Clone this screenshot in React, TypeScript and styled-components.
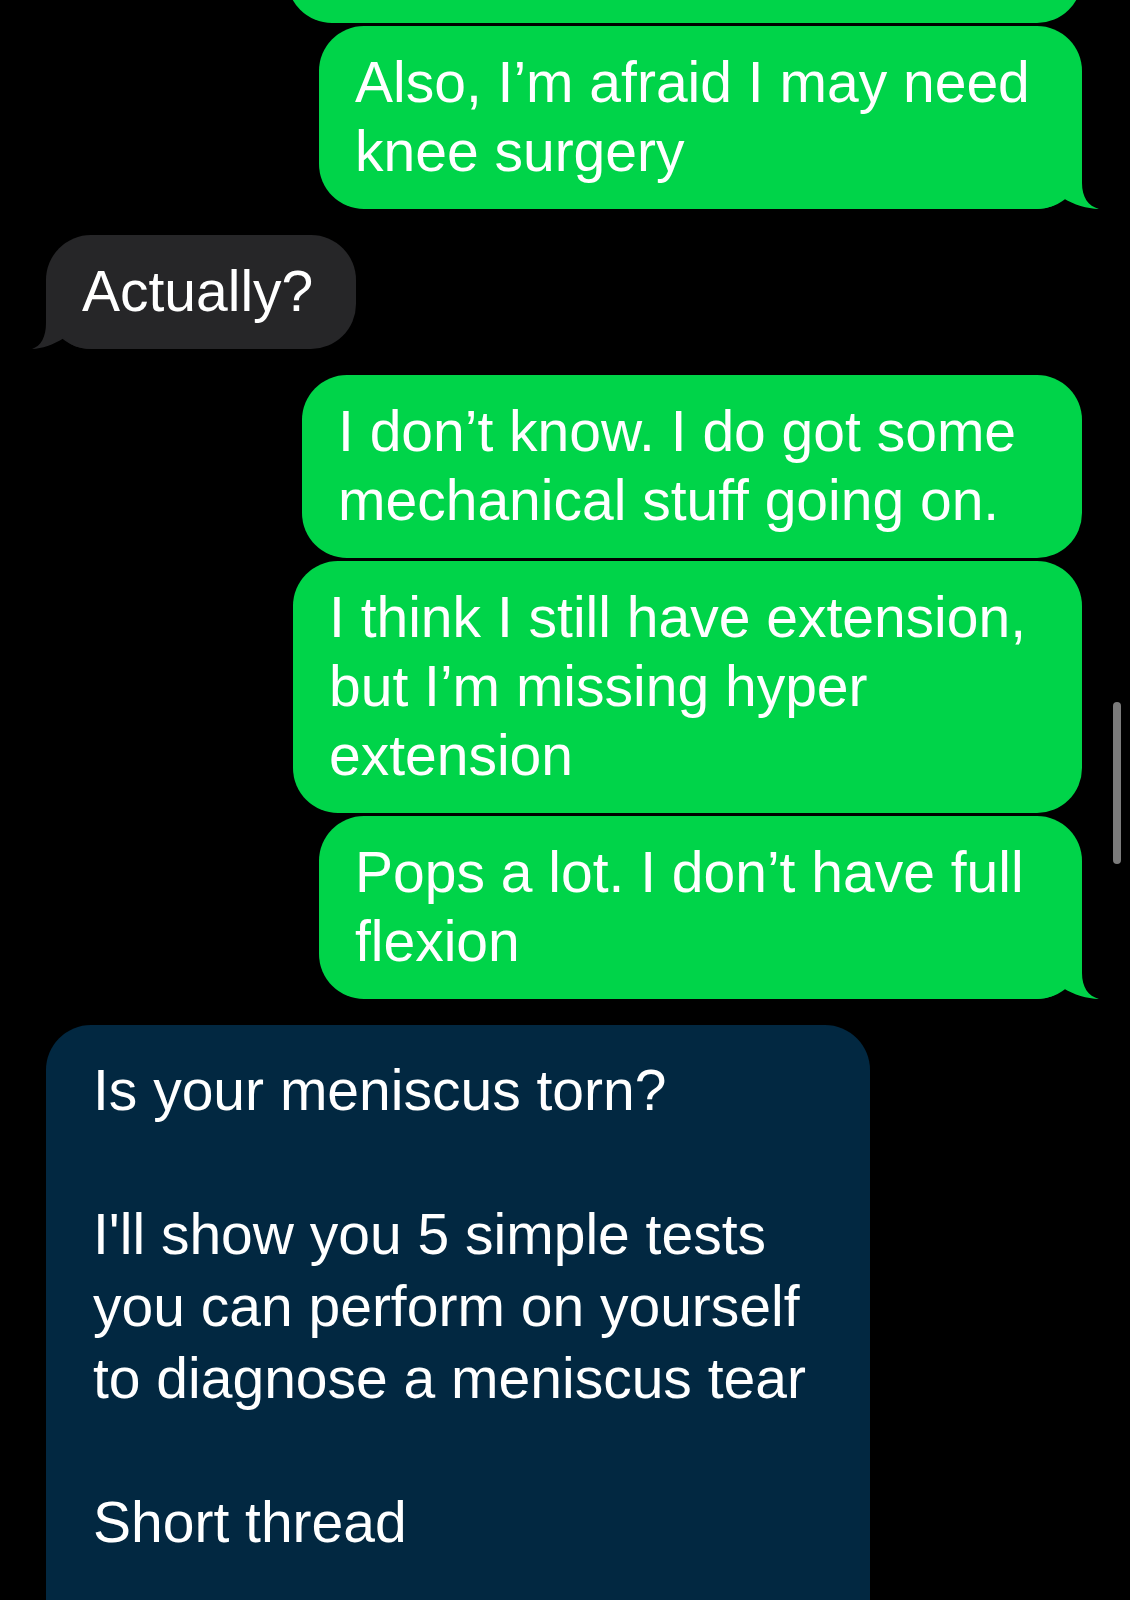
import React from "react";
import styled, { createGlobalStyle, css } from "styled-components";

const GlobalStyle = createGlobalStyle`
  html, body {
    margin: 0;
    padding: 0;
    background: #000;
  }
  body {
    font-family: "Liberation Sans", Arial, sans-serif;
    -webkit-font-smoothing: antialiased;
  }
`;

type Side = "sent" | "received" | "card";

const COLORS: Record<Side, string> = {
  sent: "#00d449",
  received: "#262628",
  card: "#022841",
};

const Screen = styled.main`
  position: relative;
  width: 1130px;
  height: 1600px;
  overflow: hidden;
  background: #000;
`;

const Thread = styled.div`
  display: flex;
  flex-direction: column;
  margin-top: -160px;
  padding: 0 48px 0 46px;
`;

const Row = styled.div<{ $side: Side; $space: number }>`
  display: flex;
  justify-content: ${(p) => (p.$side === "sent" ? "flex-end" : "flex-start")};
  margin-top: ${(p) => p.$space}px;
`;

const Bubble = styled.div<{ $side: Side; $width: number; $height?: number }>`
  position: relative;
  box-sizing: border-box;
  width: ${(p) => p.$width}px;
  ${(p) =>
    p.$height &&
    css`
      height: ${p.$height}px;
    `}
  padding: 22px 40px 23px 36px;
  border-radius: 45px;
  background: ${(p) => COLORS[p.$side]};
  color: #fff;
  font-size: 57px;
  line-height: 69px;
  white-space: nowrap;
  ${(p) =>
    p.$side === "card" &&
    css`
      padding: 29px 47px 90px 47px;
      line-height: 72px;
    `}
`;

const BubbleText = styled.span`
  position: relative;
  z-index: 1;
  display: block;
`;

const Paragraph = styled.p`
  margin: 0 0 72px;
  &:last-child {
    margin-bottom: 0;
  }
`;

const TailSvg = styled.svg<{ $side: "sent" | "received" }>`
  position: absolute;
  z-index: 0;
  bottom: 0;
  width: 64px;
  height: 60px;
  overflow: visible;
  ${(p) =>
    p.$side === "sent"
      ? css`
          right: -18px;
        `
      : css`
          left: -18px;
          transform: scaleX(-1);
        `}
`;

const TAIL_PATHS = {
  sent: "M 0 -60 L 0 -26 C 0 -12 6 -3 17 0 C 5 -0.5 -8 -4 -19 -11 C -25 -4 -33 0 -46 0 L -46 -60 Z",
  received:
    "M 0 -60 L 0 -26 C 0 -12 5 -3 14 0 C 4 -0.5 -7 -4 -18 -11 C -24 -4 -32 0 -46 0 L -46 -60 Z",
};

function Tail({ side }: { side: "sent" | "received" }) {
  return (
    <TailSvg $side={side} viewBox="-46 -60 64 60" aria-hidden="true">
      <path d={TAIL_PATHS[side]} fill={COLORS[side]} />
    </TailSvg>
  );
}

const ScrollThumb = styled.div`
  position: absolute;
  top: 702px;
  left: 1113px;
  width: 8px;
  height: 162px;
  border-radius: 4px;
  background: #7b7b7b;
`;

type Message = {
  side: "sent" | "received";
  width: number;
  space: number;
  tail?: boolean;
  height?: number;
  lines: string[];
};

const messages: Message[] = [
  { side: "sent", width: 795, space: 0, height: 183, lines: [] },
  {
    side: "sent",
    width: 763,
    space: 3,
    tail: true,
    lines: ["Also, I\u2019m afraid I may need", "knee surgery"],
  },
  { side: "received", width: 310, space: 26, tail: true, lines: ["Actually?"] },
  {
    side: "sent",
    width: 780,
    space: 26,
    lines: ["I don\u2019t know. I do got some", "mechanical stuff going on."],
  },
  {
    side: "sent",
    width: 789,
    space: 3,
    lines: ["I think I still have extension,", "but I\u2019m missing hyper", "extension"],
  },
  {
    side: "sent",
    width: 763,
    space: 3,
    tail: true,
    lines: ["Pops a lot. I don\u2019t have full", "flexion"],
  },
];

const cardParagraphs = [
  ["Is your meniscus torn?"],
  [
    "I'll show you 5 simple tests",
    "you can perform on yourself",
    "to diagnose a meniscus tear",
  ],
  ["Short thread"],
];

function Lines({ lines }: { lines: string[] }) {
  return (
    <>
      {lines.map((line, j) => (
        <React.Fragment key={j}>
          {j > 0 && <br />}
          {line}
        </React.Fragment>
      ))}
    </>
  );
}

export default function App() {
  return (
    <>
      <GlobalStyle />
      <Screen>
        <Thread>
          {messages.map((m, i) => (
            <Row key={i} $side={m.side} $space={m.space}>
              <Bubble $side={m.side} $width={m.width} $height={m.height}>
                {m.tail && <Tail side={m.side} />}
                {m.lines.length > 0 && (
                  <BubbleText>
                    <Lines lines={m.lines} />
                  </BubbleText>
                )}
              </Bubble>
            </Row>
          ))}
          <Row $side="card" $space={26}>
            <Bubble $side="card" $width={824}>
              {cardParagraphs.map((para, i) => (
                <Paragraph key={i}>
                  <Lines lines={para} />
                </Paragraph>
              ))}
            </Bubble>
          </Row>
        </Thread>
        <ScrollThumb />
      </Screen>
    </>
  );
}
